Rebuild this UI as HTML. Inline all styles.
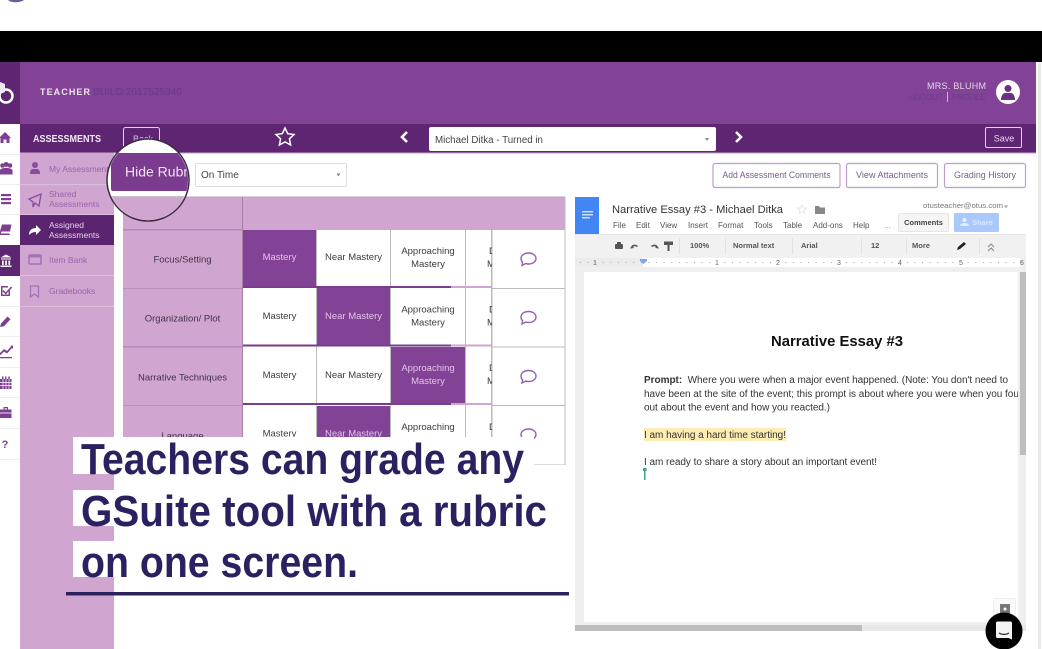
<!DOCTYPE html>
<html lang="en">
<head>
<meta charset="utf-8">
<title>Teachers can grade any GSuite tool with a rubric</title>
<style>
html,body{margin:0;padding:0;background:#fff;width:1042px;height:649px;overflow:hidden}
svg{display:block;filter:blur(.3px)}
text{font-family:"Liberation Sans",sans-serif}
.cell{font-size:9.5px;fill:#3d3a3f;text-anchor:middle}
.sel{font-size:9.5px;fill:#e3c3e6;text-anchor:middle}
.lab{font-size:9.5px;fill:#40354a;text-anchor:middle}
.side{font-size:8.5px;fill:#9c62ad}
.btn{font-size:9.5px;fill:#7c5c8a;text-anchor:middle}
.menu{font-size:8px;fill:#555}
.tb{font-size:7.5px;fill:#555;font-weight:bold}
.doc{font-size:10px;fill:#333}
.cap{font-size:44px;font-weight:bold;fill:#2a2260}
.rul{font-size:7px;fill:#666;text-anchor:middle}
</style>
</head>
<body>
<svg width="1042" height="649" viewBox="0 0 1042 649" xmlns="http://www.w3.org/2000/svg">
<defs>
<clipPath id="c5"><rect x="466" y="230" width="26" height="235"/></clipPath>
<clipPath id="circ"><circle cx="148" cy="180" r="40"/></clipPath>
<clipPath id="doc"><rect x="584" y="272" width="434" height="350"/></clipPath>
<g id="cm" fill="none" stroke="#9460ae" stroke-width="1.400"><path d="M-7.500 0c0-3.200 3.300-5.500 7.500-5.500s7.500 2.300 7.500 5.500-3.300 5.500-7.500 5.500c-1 0-2-.1-3-.4L-6.500 7l.6-3.300C-7 2.700-7.500 1.200-7.500 0z"/></g>
</defs>

<rect width="1042" height="649" fill="#fff"/>
<path d="M8 0c3 3 12 3 16 0z" fill="#6a5a9e"/>
<rect y="31" width="1042" height="31" fill="#000"/>

<!-- header -->
<rect y="62" width="1036" height="62" fill="#824295"/>
<rect y="62" width="20" height="62" fill="#5e2572"/>
<rect x="1038" y="62" width="3" height="587" fill="#e9e9e9"/>
<circle cx="6" cy="96" r="6.500" fill="none" stroke="#fff" stroke-width="2.500"/>
<path d="M0 82l5 2v8l-5 2z" fill="#f0e8f0"/>
<text x="40" y="95" font-size="9" font-weight="bold" fill="#f1e6f2" textLength="50" lengthAdjust="spacing">TEACHER</text>
<text x="93" y="95" font-size="10" fill="#6a3a8c" textLength="89" lengthAdjust="spacingAndGlyphs">BUILD 2017525940</text>
<text x="927" y="89" font-size="9" fill="#e5d5ea" textLength="59" lengthAdjust="spacing">MRS. BLUHM</text>
<text x="909" y="100" font-size="8.500" fill="#6c3d8e" textLength="34" lengthAdjust="spacing">LOGOUT</text>
<rect x="947" y="92" width="1" height="10" fill="#cdb4d8"/>
<text x="952" y="100" font-size="8.500" fill="#6c3d8e" textLength="34" lengthAdjust="spacing">PROFILE</text>
<circle cx="1008" cy="92" r="12" fill="#fff"/>
<circle cx="1008" cy="88.500" r="3.500" fill="#6a2f80"/>
<path d="M1001 100c0-4 2-7 4-7h6c2 0 4 3 4 7z" fill="#6a2f80"/>

<!-- nav bar -->
<rect y="124" width="1036" height="29" fill="#5e2572"/>
<rect y="152.500" x="20" width="1016" height="1" fill="#c9a0cc"/>
<rect x="0" y="124" width="20" height="30" fill="#fff"/>
<text x="33" y="142" font-size="10" font-weight="bold" fill="#f3e9f4" textLength="68" lengthAdjust="spacingAndGlyphs">ASSESSMENTS</text>
<rect x="123.500" y="127.500" width="36" height="24" rx="2" fill="none" stroke="#e4d2e8"/>
<text x="133" y="142" font-size="9" fill="#d9c4df">Back</text>
<path d="M285 128l2.700 5.700 6.300.8-4.600 4.300 1.200 6.200-5.600-3.100-5.600 3.100 1.200-6.200-4.600-4.300 6.300-.8z" fill="none" stroke="#fff" stroke-width="1.500"/>
<path d="M407 132l-5 5 5 5" fill="none" stroke="#fff" stroke-width="2.600"/>
<path d="M736 132l5 5-5 5" fill="none" stroke="#fff" stroke-width="2.600"/>
<rect x="429" y="127" width="287" height="24" rx="2" fill="#fff"/>
<text x="435" y="143" font-size="10" fill="#444" textLength="108" lengthAdjust="spacingAndGlyphs">Michael Ditka - Turned in</text>
<path d="M705 138h4l-2 3z" fill="#888"/>
<rect x="985.500" y="127.500" width="36" height="20" rx="1.500" fill="none" stroke="#e4d2e8"/>
<text x="1004" y="141.500" font-size="9" fill="#e6d6ea" text-anchor="middle">Save</text>

<!-- left rail -->
<path d="M0 154.500h20M0 184.500h20M0 214.500h20M0 245.500h20M0 306.500h20M0 336.500h20M0 367.500h20M0 397.500h20M0 428.500h20M0 459.500h20" stroke="#efefef"/>
<rect x="0" y="245" width="20" height="31" fill="#5e2572"/>
<g fill="#7e3f92">
<path d="M-1 138l6-6 6 6h-1.500v5H6.500v-3.500h-3V143H.5v-5z"/>
<circle cx="2.500" cy="165.500" r="2.300"/><circle cx="10" cy="165.500" r="2.300"/><circle cx="6.200" cy="164.500" r="2.500"/>
<path d="M0 174.500v-4c0-1.500 2-2.500 6-2.500s6.500 1 6.500 2.500v4z"/>
<rect x="1" y="194" width="10" height="2.200"/><rect x="1" y="198" width="10" height="2.200"/><rect x="1" y="202" width="10" height="2.200"/>
<path d="M2 224.500h9.500l-1.500 7H1.500l-.7 2h9l-.3 1.500H0l-.5-2z"/>
<path d="M-1 300h0z"/>
<path d="M1 286h7v1.500H2.500v7h6v-3l1.500-1.500v6H1z"/>
<path d="M3.500 290l2.300 2.400L11 286.500l1.200 1-6.400 7-3.400-3.400z"/>
<path d="M0 327l1-3.500 6.500-7 3 2.800-6.500 7z"/>
<path d="M0 353l4-4 3 2 4-4.500-1-.5 3-.5v3.500l-1-1-5 5.500-3-2-4 4zM0 357h12v1.300H0z"/>
<path d="M0 379h11.500v10H0zM2 376.500h1.500v2.500H2zM5 376.500h1.500v2.500H5zM8.300 376.500h1.500v2.500H8.300z"/>
<path d="M0 409.500h11.500v8.500H0zM3.500 407h4.500v2.500H6.800v-1.300H4.700v1.300H3.500z"/>
</g>
<path d="M0 382.500h11.500M0 385.500h11.500M3 379v10M6 379v10M9 379v10" stroke="#fff" stroke-width=".7"/>
<path d="M0 413h11.500" stroke="#fff" stroke-width=".8"/>
<g fill="#fff">
<path d="M6 254.500l5.500 3H.5zM1 258.500h10v1H1zM2 260.500h1.700v4.500H2zM5.200 260.500h1.700v4.500H5.200zM8.400 260.500h1.700v4.500H8.400zM.5 265.500h11v1.500H.5z"/>
</g>
<text x="5" y="448" font-size="11" font-weight="bold" fill="#7e3f92" text-anchor="middle">?</text>

<!-- sidebar -->
<rect x="20" y="153" width="94" height="496" fill="#d0a5cf"/>
<rect x="20" y="184" width="94" height="1" fill="#dcbfdc"/>
<rect x="20" y="214" width="94" height="1" fill="#dcbfdc"/>
<rect x="20" y="215" width="94" height="30" fill="#5a2470"/>
<rect x="20" y="275" width="94" height="1" fill="#dcbfdc"/>
<rect x="20" y="306" width="94" height="1" fill="#dcbfdc"/>
<g fill="#8a4c9e">
<circle cx="35" cy="165" r="3"/><path d="M30 174c0-3 1-5 3-5h4c2 0 3 2 3 5z"/>
</g>
<path d="M29 199l12-5-2 12-4-3-2 4v-5z" fill="none" stroke="#8a4c9e" stroke-width="1.300"/>
<path d="M29 235c0-5 3-7 7-7v-3l5 5-5 5v-3c-3 0-5 1-7 3z" fill="#fff"/>
<rect x="29" y="255" width="12" height="9" rx="1" fill="none" stroke="#a670b5" stroke-width="1.500"/>
<rect x="29" y="255" width="12" height="2.500" fill="#a670b5"/>
<path d="M30.500 286h8v11l-4-3-4 3z" fill="none" stroke="#a670b5" stroke-width="1.300"/>
<text class="side" x="49" y="172">My Assessments</text>
<text class="side" x="49" y="197">Shared</text>
<text class="side" x="49" y="207">Assessments</text>
<text class="side" x="49" y="228" style="fill:#e6d2ea">Assigned</text>
<text class="side" x="49" y="238" style="fill:#e6d2ea">Assessments</text>
<text class="side" x="49" y="263">Item Bank</text>
<text class="side" x="49" y="294">Gradebooks</text>

<!-- controls -->
<rect x="195.500" y="163.500" width="151" height="23" rx="1" fill="#fff" stroke="#ddd"/>
<text x="201" y="178" font-size="10" fill="#444">On Time</text>
<path d="M336.500 173.500h4l-2 3z" fill="#888"/>
<rect x="713" y="163.500" width="127" height="24" rx="2" fill="#fff" stroke="#c09ccd" stroke-width="1.200"/>
<text class="btn" x="776.500" y="178" textLength="108" lengthAdjust="spacingAndGlyphs">Add Assessment Comments</text>
<rect x="846.500" y="163.500" width="91" height="24" rx="2" fill="#fff" stroke="#c09ccd" stroke-width="1.200"/>
<text class="btn" x="892" y="178" textLength="72" lengthAdjust="spacingAndGlyphs">View Attachments</text>
<rect x="944.500" y="163.500" width="81" height="24" rx="2" fill="#fff" stroke="#c09ccd" stroke-width="1.200"/>
<text class="btn" x="985" y="178" textLength="62" lengthAdjust="spacingAndGlyphs">Grading History</text>

<!-- table -->
<rect x="123" y="197" width="442" height="33" fill="#d0a5cf"/>
<rect x="123" y="196.500" width="442" height="1" fill="#b7a5ba"/>
<rect x="242" y="197" width="1" height="33" fill="#a880a8"/>
<rect x="123" y="229" width="119" height="236" fill="#d0a5cf"/>
<rect x="123" y="229" width="119" height="1.500" fill="#b888bc"/>
<rect x="123" y="288" width="119" height="1" fill="#b792b8"/>
<rect x="123" y="346" width="119" height="1.500" fill="#b888bc"/>
<rect x="123" y="405" width="119" height="1" fill="#b792b8"/>
<rect x="242" y="229" width="1" height="236" fill="#a880a8"/>

<g fill="#bbb">
<rect x="316" y="230" width="1" height="235"/>
<rect x="390" y="230" width="1" height="235"/>
<rect x="465" y="230" width="1" height="235"/>
<rect x="491" y="230" width="1.500" height="235"/>
<rect x="564.500" y="197" width="1" height="268"/>
<rect x="492" y="288" width="73" height="1"/>
<rect x="492" y="346.500" width="73" height="1"/>
<rect x="492" y="405" width="73" height="1"/>
<rect x="534" y="464.500" width="31" height="1"/>
</g>
<rect x="243" y="230" width="73" height="57" fill="#824295"/>
<rect x="317" y="288" width="73" height="57" fill="#824295"/>
<rect x="391" y="347" width="74" height="58" fill="#824295"/>
<rect x="317" y="406" width="73" height="59" fill="#824295"/>
<g>
<rect x="243" y="286" width="208" height="2" fill="#7a3d8e"/><rect x="451" y="286" width="41" height="2" fill="#d0a5cf"/>
<rect x="243" y="344.500" width="208" height="2" fill="#7a3d8e"/><rect x="451" y="344.500" width="41" height="2" fill="#d0a5cf"/>
<rect x="243" y="403" width="208" height="2" fill="#7a3d8e"/><rect x="451" y="403" width="41" height="2" fill="#d0a5cf"/>
</g>

<text class="lab" x="182.500" y="262.500">Focus/Setting</text>
<text class="lab" x="182.500" y="321.500">Organization/ Plot</text>
<text class="lab" x="182.500" y="380.500">Narrative Techniques</text>
<text class="lab" x="182.500" y="439">Language</text>

<text class="sel" x="279.500" y="260">Mastery</text>
<text class="cell" x="279.500" y="319">Mastery</text>
<text class="cell" x="279.500" y="378">Mastery</text>
<text class="cell" x="279.500" y="436.500">Mastery</text>

<text class="cell" x="353.500" y="260">Near Mastery</text>
<text class="sel" x="353.500" y="319">Near Mastery</text>
<text class="cell" x="353.500" y="378">Near Mastery</text>
<text class="sel" x="353.500" y="436.500">Near Mastery</text>

<text class="cell" x="428" y="254">Approaching</text><text class="cell" x="428" y="267">Mastery</text>
<text class="cell" x="428" y="312.500">Approaching</text><text class="cell" x="428" y="325.500">Mastery</text>
<text class="sel" x="428" y="371">Approaching</text><text class="sel" x="428" y="384">Mastery</text>
<text class="cell" x="428" y="430">Approaching</text>

<g clip-path="url(#c5)">
<text class="cell" style="text-anchor:start" x="489" y="254">Developing</text><text class="cell" style="text-anchor:start" x="487" y="267">Mastery</text>
<text class="cell" style="text-anchor:start" x="489" y="312.500">Developing</text><text class="cell" style="text-anchor:start" x="487" y="325.500">Mastery</text>
<text class="cell" style="text-anchor:start" x="489" y="371">Developing</text><text class="cell" style="text-anchor:start" x="487" y="384">Mastery</text>
<text class="cell" style="text-anchor:start" x="489" y="430">Developing</text>
</g>
<use href="#cm" x="528.500" y="258.500"/>
<use href="#cm" x="528.500" y="317"/>
<use href="#cm" x="528.500" y="376"/>
<use href="#cm" x="528.500" y="434.500"/>

<!-- circle magnifier -->
<circle cx="148" cy="180" r="41" fill="#fff"/>
<g clip-path="url(#circ)">
<rect x="111" y="153" width="82" height="38" rx="2" fill="#7b3b8f"/>
<rect x="107" y="197" width="90" height="30" fill="#d0a5cf"/>
<rect x="107" y="196" width="90" height="1.500" fill="#c3c3c3"/>
<text x="125" y="176.500" font-size="14" fill="#efe3f2">Hide Rubric</text>
</g>
<circle cx="148" cy="180" r="41" fill="none" stroke="#3c2a44" stroke-width="1.500"/>

<!-- doc panel -->
<rect x="575" y="197" width="451" height="37" fill="#fff"/>
<rect x="575" y="197" width="24" height="37" fill="#4285f4"/>
<g fill="#cfe0fc"><rect x="582" y="211" width="11" height="1.500"/><rect x="582" y="214" width="11" height="1.500"/><rect x="582" y="217" width="8" height="1.500"/></g>
<text x="612" y="213" font-size="11" fill="#333" textLength="171" lengthAdjust="spacingAndGlyphs">Narrative Essay #3 - Michael Ditka</text>
<path d="M802 205l1.300 2.800 3 .3-2.200 2.100.6 3-2.700-1.500-2.700 1.500.6-3-2.200-2.100 3-.3z" fill="none" stroke="#e6e6e6"/>
<path d="M815 206h4l1 1.500h5v6.500h-10z" fill="#888"/>
<text x="923" y="208" font-size="7.500" fill="#777" textLength="80" lengthAdjust="spacingAndGlyphs">otusteacher@otus.com</text>
<path d="M1004 205.500h4l-2 2.500z" fill="#999"/>
<text class="menu" x="613" y="228">File</text>
<text class="menu" x="636" y="228">Edit</text>
<text class="menu" x="660" y="228">View</text>
<text class="menu" x="688" y="228">Insert</text>
<text class="menu" x="718" y="228">Format</text>
<text class="menu" x="754" y="228">Tools</text>
<text class="menu" x="783" y="228">Table</text>
<text class="menu" x="813" y="228">Add-ons</text>
<text class="menu" x="853" y="228">Help</text>
<text class="menu" x="884" y="228" style="fill:#999">...</text>
<rect x="898.500" y="213.500" width="50" height="18" rx="1.500" fill="#f5f5f5" stroke="#e6e6e6"/>
<text x="923.500" y="225" font-size="7.500" font-weight="bold" fill="#444" text-anchor="middle">Comments</text>
<rect x="954" y="213" width="45" height="19" rx="1.500" fill="#a9c8fb"/>
<circle cx="964.500" cy="220" r="2.200" fill="#e3edff"/><path d="M960 226c0-2 2-3 4.500-3s4.500 1 4.500 3z" fill="#e3edff"/>
<text x="972" y="225" font-size="7.500" font-weight="bold" fill="#dce8ff">Share</text>

<rect x="575" y="234" width="451" height="24" fill="#f1f1f1"/>
<rect x="575" y="234" width="451" height="1" fill="#e6e6e6"/>
<g fill="#555">
<rect x="615" y="244" width="8" height="5" rx="1"/><rect x="617" y="242" width="4" height="2"/>
<path d="M631 247c1-3 5-3 7-1l-1 1c-2-1-3-1-4 0l1 1-4 .5z"/>
<path d="M658 247c-1-3-5-3-7-1l1 1c2-1 3-1 4 0l-1 1 4 .5z"/>
<rect x="664" y="241.500" width="9" height="3.500"/><rect x="667.500" y="245" width="2" height="6"/>
</g>
<g fill="#e2e2e2">
<rect x="679" y="238" width="1" height="16"/><rect x="725" y="238" width="1" height="16"/><rect x="792" y="238" width="1" height="16"/><rect x="861" y="238" width="1" height="16"/><rect x="906" y="238" width="1" height="16"/><rect x="979" y="238" width="1" height="16"/>
</g>
<text class="tb" x="690" y="248">100%</text>
<text class="tb" x="733" y="248">Normal text</text>
<text class="tb" x="801" y="248">Arial</text>
<text class="tb" x="871" y="248">12</text>
<text class="tb" x="912" y="248">More</text>
<path d="M957 250l1-3 6-5 2 2-6 5z" fill="#222"/>
<path d="M988 247l3-3 3 3M988 251l3-3 3 3" fill="none" stroke="#888"/>

<rect x="575" y="258" width="451" height="373" fill="#efefef"/>
<rect x="575" y="258" width="68" height="9" fill="#ebebeb"/>
<rect x="643" y="258" width="377" height="9" fill="#fff"/>
<path d="M580 262.500H1024" stroke="#aaa" stroke-dasharray="1 6.600"/>
<rect x="711" y="259" width="12" height="7" fill="#fff"/><rect x="772" y="259" width="12" height="7" fill="#fff"/><rect x="833" y="259" width="12" height="7" fill="#fff"/><rect x="894" y="259" width="12" height="7" fill="#fff"/><rect x="955" y="259" width="12" height="7" fill="#fff"/>
<text class="rul" x="595" y="265">1</text>
<text class="rul" x="717" y="265">1</text>
<text class="rul" x="778" y="265">2</text>
<text class="rul" x="839" y="265">3</text>
<text class="rul" x="900" y="265">4</text>
<text class="rul" x="961" y="265">5</text>
<text class="rul" x="1022" y="265">6</text>
<path d="M640 259h7v2l-3.500 3-3.500-3z" fill="#7da7ee"/>
<rect x="584" y="272" width="434" height="350" fill="#fff"/>
<rect x="1020" y="272" width="6" height="183" fill="#bdbdbd"/>
<rect x="575" y="625" width="287" height="6" fill="#bdbdbd"/>
<rect x="862" y="625" width="164" height="6" fill="#e8e8e8"/>

<g clip-path="url(#doc)">
<text x="771" y="346" font-size="14.500" font-weight="bold" fill="#111" textLength="132" lengthAdjust="spacingAndGlyphs">Narrative Essay #3</text>
<text class="doc" x="644" y="383" textLength="364" lengthAdjust="spacing"><tspan font-weight="bold">Prompt:</tspan>&#160; Where you were when a major event happened. (Note: You don't need to</text>
<text class="doc" x="644" y="397" textLength="386" lengthAdjust="spacing">have been at the site of the event; this prompt is about where you were when you found</text>
<text class="doc" x="644" y="410.500" textLength="186" lengthAdjust="spacing">out about the event and how you reacted.)</text>
<rect x="644" y="428" width="142" height="13" fill="#fdedb2"/>
<text class="doc" x="644" y="438" textLength="142" lengthAdjust="spacing">I am having a hard time starting!</text>
<text class="doc" x="644" y="465" textLength="233" lengthAdjust="spacing">I am ready to share a story about an important event!</text>
<rect x="644" y="469" width="1.500" height="11" fill="#3fa58c"/>
<rect x="643" y="468" width="3.500" height="3" fill="#3fa58c"/>
</g>

<!-- caption -->
<rect x="73" y="437" width="461" height="37" fill="#fff"/>
<rect x="114" y="465" width="460" height="175" fill="#fff"/>
<rect x="73" y="490" width="41" height="36" fill="#fff"/>
<rect x="73" y="541" width="41" height="36" fill="#fff"/>
<text class="cap" x="81" y="474" textLength="443" lengthAdjust="spacingAndGlyphs">Teachers can grade any</text>
<text class="cap" x="81" y="526" textLength="466" lengthAdjust="spacingAndGlyphs">GSuite tool with a rubric</text>
<text class="cap" x="81" y="577" textLength="277" lengthAdjust="spacingAndGlyphs">on one screen.</text>
<rect x="66" y="592" width="503" height="3.500" fill="#2d2260"/>

<!-- floating -->
<rect x="993.500" y="598.500" width="22" height="24" rx="2" fill="#fafafa" stroke="#eee"/>
<rect x="1000" y="604" width="10" height="10" fill="#777"/>
<path d="M1003.500 609h3M1005 607.500v3" stroke="#fff" stroke-width="1.500"/>
<circle cx="1004" cy="631" r="18.500" fill="#000"/>
<path d="M996 623a1.500 1.500 0 0 1 1.500-1.500h13a1.500 1.500 0 0 1 1.500 1.500v16.500l-3.500-1.500h-11a1.500 1.500 0 0 1-1.500-1.500z" fill="#f4f4f4"/>
<path d="M999 633c3 2 7 2 10 0" fill="none" stroke="#222" stroke-width="1.200"/>
</svg>
</body>
</html>
